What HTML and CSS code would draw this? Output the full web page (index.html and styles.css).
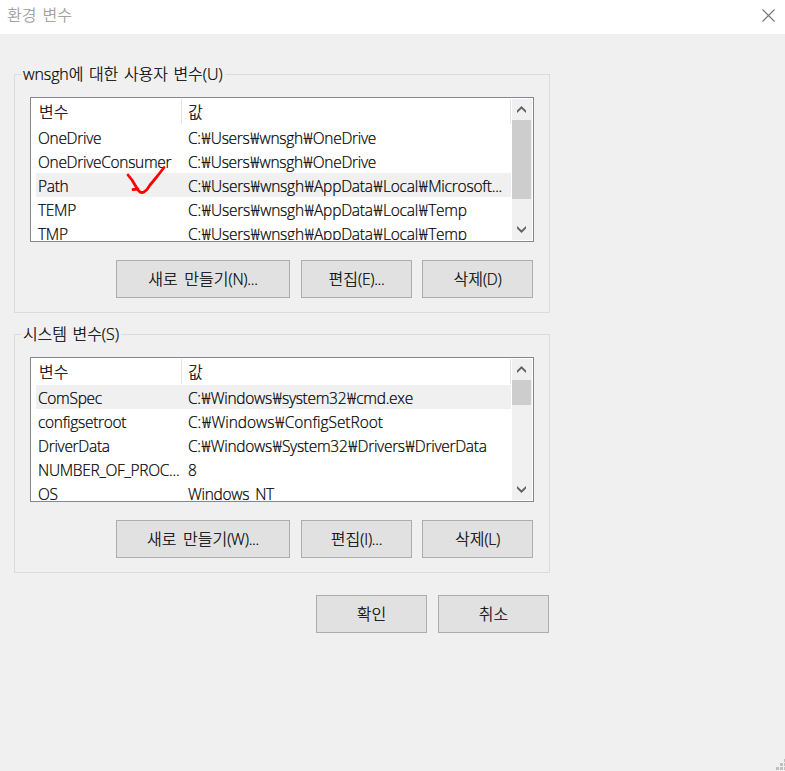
FILE: index.html
```html
<!DOCTYPE html>
<html lang="ko">
<head>
<meta charset="utf-8">
<title>환경 변수</title>
<link rel="stylesheet" href="styles.css">
</head>
<body>
<div class="window">
  <header class="titlebar">
    <span class="title">환경 변수</span>
    <svg class="close" width="13" height="13" viewBox="0 0 13 13"><path d="M.5 .5L12.5 12.5M12.5 .5L.5 12.5"/></svg>
  </header>
  <main class="dialog">
    <section class="group">
      <h2 class="legend"><span>wnsgh에 대한 사용자 변수(U)</span></h2>
      <div class="list">
        <div class="table">
          <div class="head"><span class="name">변수</span><span class="value">값</span></div>
          <div class="row"><span class="name">OneDrive</span><span class="value">C:<i>₩</i>Users<i>₩</i>wnsgh<i>₩</i>OneDrive</span></div>
          <div class="row"><span class="name">OneDriveConsumer</span><span class="value">C:<i>₩</i>Users<i>₩</i>wnsgh<i>₩</i>OneDrive</span></div>
          <div class="row selected"><span class="name">Path</span><span class="value wider">C:<i>₩</i>Users<i>₩</i>wnsgh<i>₩</i>AppData<i>₩</i>Local<i>₩</i>Microsoft...</span></div>
          <div class="row"><span class="name">TEMP</span><span class="value wider">C:<i>₩</i>Users<i>₩</i>wnsgh<i>₩</i>AppData<i>₩</i>Local<i>₩</i>Temp</span></div>
          <div class="row"><span class="name">TMP</span><span class="value wider">C:<i>₩</i>Users<i>₩</i>wnsgh<i>₩</i>AppData<i>₩</i>Local<i>₩</i>Temp</span></div>
        </div>
        <div class="scrollbar">
          <svg class="arrow" width="20" height="21" viewBox="0 0 20 21"><path d="M5 14V11.4L9.5 7L14 11.4V14L9.5 9.8Z"/></svg>
          <div class="thumb thumb-user"></div>
          <svg class="arrow" width="20" height="21" viewBox="0 0 20 21"><path d="M5 7V9.6L9.5 14L14 9.6V7L9.5 11.2Z"/></svg>
        </div>
        <svg class="mark" width="44" height="34" viewBox="0 0 44 34"><path d="M4 10L8 15L11 20L14 25L16 27Q18 28 20 27L23 24.5L26 20L31 14L35 9L40 2.5M9 24.5L14 24"/></svg>
      </div>
      <div class="buttons">
        <button class="wide">새로 만들기<b>(N)...</b></button><button>편집<b>(E)...</b></button><button>삭제<b>(D)</b></button>
      </div>
    </section>
    <section class="group">
      <h2 class="legend"><span>시스템 변수(S)</span></h2>
      <div class="list">
        <div class="table">
          <div class="head"><span class="name">변수</span><span class="value">값</span></div>
          <div class="row selected"><span class="name">ComSpec</span><span class="value">C:<i>₩</i>Windows<i>₩</i>system32<i>₩</i>cmd.exe</span></div>
          <div class="row"><span class="name">configsetroot</span><span class="value loose">C:<i>₩</i>Windows<i>₩</i>ConfigSetRoot</span></div>
          <div class="row"><span class="name">DriverData</span><span class="value">C:<i>₩</i>Windows<i>₩</i>System32<i>₩</i>Drivers<i>₩</i>DriverData</span></div>
          <div class="row"><span class="name">NUMBER_OF_PROC...</span><span class="value">8</span></div>
          <div class="row"><span class="name">OS</span><span class="value">Windows_NT</span></div>
        </div>
        <div class="scrollbar">
          <svg class="arrow" width="20" height="21" viewBox="0 0 20 21"><path d="M5 14V11.4L9.5 7L14 11.4V14L9.5 9.8Z"/></svg>
          <div class="thumb thumb-system"></div>
          <svg class="arrow" width="20" height="21" viewBox="0 0 20 21"><path d="M5 7V9.6L9.5 14L14 9.6V7L9.5 11.2Z"/></svg>
        </div>
      </div>
      <div class="buttons">
        <button class="wide">새로 만들기<b>(W)...</b></button><button>편집<b>(I)...</b></button><button>삭제<b>(L)</b></button>
      </div>
    </section>
    <footer class="actions"><button>확인</button><button>취소</button></footer>
  </main>
  <svg class="grip" width="9" height="12" viewBox="0 0 9 12"><path d="M8 0h3v3h-3zM4 4h3v3h-3zM8 4h3v3h-3zM0 8h3v3h-3zM4 8h3v3h-3zM8 8h3v3h-3z"/></svg>
</div>
</body>
</html>
```
FILE: styles.css
```css
* { box-sizing: border-box; }
body {
  margin: 0;
  background: #f0f0f0;
  color: #000;
  font: 300 15.5px/24px "Open Sans", "Noto Sans CJK KR", sans-serif;
  -webkit-text-stroke: .22px;
}
.window { position: relative; height: 771px; overflow: hidden; }
.titlebar {
  display: flex;
  justify-content: space-between;
  align-items: flex-start;
  height: 34px;
  padding: 9px 10px 0 7px;
  background: #fff;
}
.title {
  margin-top: -2px;
  font: 300 16px/14px "Noto Sans CJK KR", sans-serif;
  word-spacing: 1.5px;
  color: #999;
}
.close { fill: none; stroke: #777; stroke-width: 1.1; }
.dialog { width: 550px; padding: 40px 0 0 14px; }
.group {
  height: 239px;
  margin-bottom: 21px;
  padding: 0 16px 0 15px;
  border: 1px solid #dcdcdc;
}
.legend {
  display: flex;
  height: 22px;
  margin: -12px 0 12px -9px;
  font: 300 16px/22px "Open Sans", "Noto Sans CJK KR", sans-serif;
  letter-spacing: -.1px;
  word-spacing: 1.6px;
}
.legend span {
  padding: 0 2px;
  background: #f0f0f0;
  white-space: nowrap;
}
.list {
  position: relative;
  display: flex;
  width: 504px;
  height: 145px;
  border: 1px solid #828790;
  background: #fff;
}
.table { width: 480px; height: 142px; padding-left: 5px; overflow: hidden; }
.head, .row { display: flex; height: 24px; white-space: nowrap; }
.head {
  height: 25px;
  margin: 1px 0 0;
  border-right: 1px solid #e5e5e5;
  font: 300 16px/24px "Noto Sans CJK KR", sans-serif;
}
.head + .row { margin-top: 1px; }
.row { height: 24px; line-height: 26px; letter-spacing: -.3px; }
.name { width: 146px; padding-left: 2px; }
.head .name { padding-left: 3px; border-right: 1px solid #e5e5e5; }
.value { padding-left: 6px; }
.wider { letter-spacing: -.22px; }
.loose { letter-spacing: -.05px; }
.row.selected { background: #f0f0f0; }
i {
  margin: 0 .8px 0 1px;
  font: 300 16px/20px "Noto Sans CJK KR", sans-serif;
  -webkit-text-stroke: .1px;
}
.scrollbar { width: 20px; margin: 1px; background: #f0f0f0; }
.arrow { display: block; fill: #606060; }
.thumb { width: 19px; background: #cdcdcd; }
.thumb-user { height: 79px; margin-bottom: 20px; }
.thumb-system { height: 25px; margin-bottom: 74px; }
.mark {
  position: absolute;
  left: 93px;
  top: 67px;
  fill: none;
  stroke: #f00;
  stroke-width: 2.8;
  stroke-linecap: round;
  stroke-linejoin: round;
}
.buttons { display: flex; gap: 10px; margin: 18px 0 0 86px; }
button {
  width: 111px;
  height: 38px;
  padding: 0 0 2px;
  border: 1px solid #adadad;
  background: #e1e1e1;
  color: #000;
  font: 300 16px/32px "Noto Sans CJK KR", sans-serif;
  word-spacing: 2px;
}
button.wide { width: 174px; margin-right: 1px; }
button b { font: 300 15.5px/32px "Open Sans", sans-serif; letter-spacing: -.25px; }
.actions { display: flex; gap: 11px; margin: 22px 0 0 302px; }
.grip { position: absolute; right: 0; bottom: 0; fill: #bfbfbf; }
```
